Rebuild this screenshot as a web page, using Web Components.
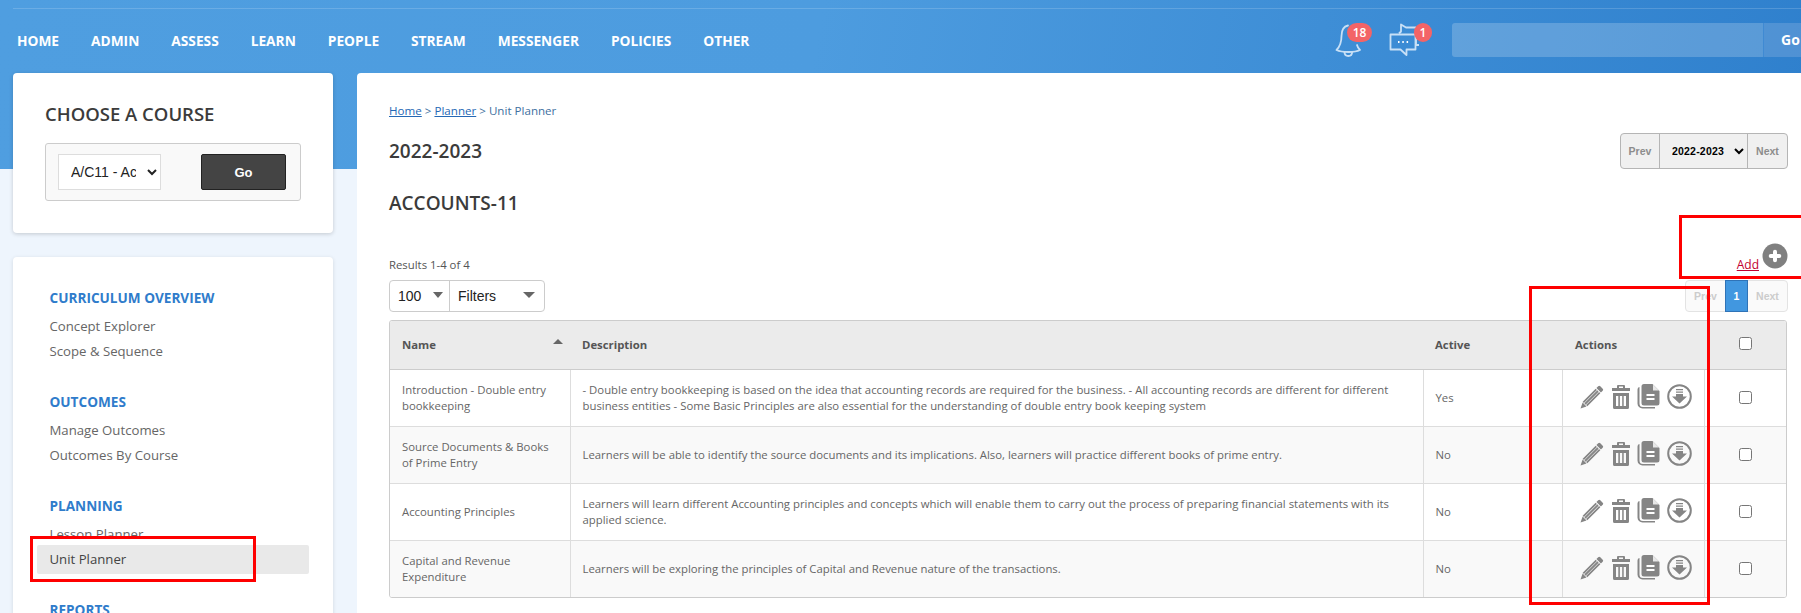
<!DOCTYPE html>
<html><head><meta charset="utf-8"><title>Unit Planner</title>
<style>
html,body{margin:0;padding:0;height:613px;overflow:hidden;background:#eef5fd}
</style></head><body>
<app-shell>
  <top-bar slot="top"></top-bar>
  <side-column slot="side"></side-column>
  <main-panel slot="main"></main-panel>
</app-shell>
<script>
function el(name, css, html, init){
  customElements.define(name, class extends HTMLElement{
    connectedCallback(){
      if(this.shadowRoot) return;
      const r=this.attachShadow({mode:'open'});
      r.innerHTML='<style>'+css+'</style>'+(typeof html==='function'?html(this):html);
      if(init) init(this,r);
    }
  });
}
const FONT='"Open Sans","Liberation Sans",sans-serif';

el('app-shell',`
:host{display:block;position:relative;width:1801px;height:613px;overflow:hidden;font-family:${FONT};
 background:linear-gradient(100deg,#4f9ee0 0%,#4d9cdf 45%,#2f80cd 100%) top/100% 169px no-repeat,#eef5fd}
.body{display:grid;grid-template-columns:320px 1fr;column-gap:24px;padding-left:13px}
.mark{position:absolute;border:3px solid #fe0000;box-sizing:border-box;pointer-events:none}
`,`<slot name="top"></slot><div class="body"><slot name="side"></slot><slot name="main"></slot></div>
<div class="mark" style="left:30px;top:536px;width:226px;height:46px"></div>
<div class="mark" style="left:1679px;top:215px;width:140px;height:64px"></div>
<div class="mark" style="left:1529px;top:286px;width:181px;height:319px"></div>`);

el('top-bar',`
:host{display:block;height:73px;box-sizing:border-box;position:relative;font-family:${FONT}}
.rule{position:absolute;left:13px;right:0;top:8px;height:1px;background:rgba(255,255,255,.16)}
.row{display:flex;align-items:center;height:73px;padding:7px 0 0 17px;box-sizing:border-box}
nav{display:flex;gap:32px;font-size:13.730px;font-weight:700;color:#fff;letter-spacing:0}
.tools{margin-left:auto;display:flex;align-items:center}
.ic{position:relative;display:block;width:36px;height:34px}
.ic svg{position:absolute;left:0;top:0}
.bdg{position:absolute;top:0;height:19px;border-radius:10px;background:#f36467;color:#fff;font-size:12px;font-weight:600;line-height:19px;text-align:center}
.search{margin-left:20px;width:349px;height:34px;display:flex;background:rgba(255,255,255,.2);border-radius:3px 0 0 3px;box-sizing:border-box}
.search i{flex:1}
.search b{width:38px;border-left:1px solid #3f8ad3;color:#fff;font:700 14px/34px ${FONT};padding-left:17px;box-sizing:border-box;background:rgba(60,130,205,.3);overflow:hidden}
`,`<div class="rule"></div><div class="row"><nav><span>HOME</span><span>ADMIN</span><span>ASSESS</span><span>LEARN</span><span>PEOPLE</span><span>STREAM</span><span>MESSENGER</span><span>POLICIES</span><span>OTHER</span></nav>
<div class="tools">
<span class="ic" style="width:54px;height:34px"><svg width="30" height="34" viewBox="0 0 30 34" fill="none" stroke="#c8e0f6" stroke-width="1.800" stroke-linecap="round" stroke-linejoin="round"><path d="M13 2.500C8.500 3.500 6.500 8 6.500 13c0 7-2 11-5 14 3 1.500 7 2 12 2s8.500-.5 11.500-2c-1.500-1.500-2.500-3-3-5"/><path d="M9.500 29c0 2.500 1.800 4 3.800 4s3.800-1.500 3.800-4"/></svg><span class="bdg" style="left:12px;width:25px">18</span></span>
<span class="ic" style="width:43px;height:34px"><svg width="32" height="34" viewBox="0 0 32 34" fill="none" stroke="#c8e0f6" stroke-width="1.800" stroke-linejoin="round"><path d="M1.500 11.500h25V26.500h-9v5.500l-6-5.500H1.500z"/><path d="M10 10.500l2-2V1.500l5 3h10M27 16v6h3"/><path d="M9 19h1.500M13.300 19h1.500M17.600 19h1.500" stroke="#fff"/></svg><span class="bdg" style="left:25px;width:18px">1</span></span>
</div>
<div class="search"><i></i><b>Go</b></div></div>`);

el('side-column',`
:host{display:flex;flex-direction:column;gap:24px}
`,`<course-card></course-card><side-menu></side-menu>`);

el('course-card',`
:host{display:block;height:160px;box-sizing:border-box;background:#fff;border-radius:4px;box-shadow:0 1px 4px rgba(0,0,0,.18);padding:25px 32px 0}
h2{margin:0;font-size:18.500px;line-height:32px;font-weight:600;color:#3b3b3b}
.box{margin-top:13px;height:58px;box-sizing:border-box;border:1px solid #ccc;border-radius:3px;background:#f9f9f9;display:flex;align-items:center;justify-content:space-between;padding:0 14px 0 12px}
select{width:103px;height:36px;background:#fff;border:1px solid #ddd;font:14px "Liberation Sans",sans-serif;padding:0 8px;color:#222;border-radius:0}
button{width:85px;height:36px;background:#444;border:1px solid #222;border-radius:2px;color:#fff;font:700 13px "Liberation Sans",sans-serif}
`,`<h2>CHOOSE A COURSE</h2><div class="box"><select><option>A/C11 - Accounts-11</option></select><button>Go</button></div>`);

el('side-menu',`
:host{display:block;background:#fff;border-radius:4px;box-shadow:0 1px 4px rgba(0,0,0,.12);padding:29px 24px 0;height:400px;box-sizing:border-box}
h3{margin:0 0 0 12.500px;font-size:13.600px;line-height:24px;font-weight:700;color:#2f7ccb}
ul{list-style:none;margin:4px 0 26px;padding:0}
li{font-size:13.200px;line-height:25px;color:#666;padding-left:12.500px;height:25px}
li.on{background:#e9e9e9;border-radius:2px;color:#444;height:29px;line-height:29px;margin:-2px 0;font-weight:500}
`,`<h3>CURRICULUM OVERVIEW</h3><ul><li>Concept Explorer</li><li>Scope &amp; Sequence</li></ul>
<h3>OUTCOMES</h3><ul><li>Manage Outcomes</li><li>Outcomes By Course</li></ul>
<h3>PLANNING</h3><ul><li>Lesson Planner</li><li class="on">Unit Planner</li></ul>
<h3>REPORTS</h3>`);

el('main-panel',`
:host{display:block;background:#fff;border-radius:4px 0 0 0;padding:29px 13px 0 32px;height:540px;box-sizing:border-box;color:#444}
.crumb{font-size:11.600px;line-height:18px;color:#41709f}
.crumb a{color:#2568b5;text-decoration:underline}
.head{display:flex;justify-content:space-between;align-items:flex-start;margin-top:13px;height:36px}
h1,h2{margin:0;font-size:19px;font-weight:600;color:#3b3b3b;line-height:36px}
h2{margin-top:16px}
.add{display:flex;align-items:flex-end;height:30px;margin-top:22px}
.res{font-size:11.350px;line-height:16px;color:#555;margin-right:auto}
.add a{color:#c2002f;font-size:12px;text-decoration:underline;line-height:16px;margin-right:3px}
.add svg{margin-bottom:4px;display:block}
.tools{display:flex;justify-content:space-between;margin-top:7px}
`,`<div class="crumb"><a>Home</a> &gt; <a>Planner</a> &gt; Unit Planner</div>
<div class="head"><h1>2022-2023</h1><year-pager></year-pager></div>
<h2>ACCOUNTS-11</h2>
<div class="add"><div class="res">Results 1-4 of 4</div><a>Add</a><svg width="26" height="26" viewBox="0 0 26 26"><circle cx="13" cy="13" r="12.500" fill="#808080"/><path d="M13 8.700v8.600M8.700 13h8.600" stroke="#fff" stroke-width="4" stroke-linecap="round"/></svg></div>
<div class="tools"><filter-bar></filter-bar><page-nav></page-nav></div>
<unit-table></unit-table>`);

el('year-pager',`
:host{display:flex;height:36px;box-sizing:border-box;width:168px;border:1px solid #b5b5b5;border-radius:4px;background:#f0f0f0;font:700 10.500px "Liberation Sans",sans-serif;color:#8c8c8c}
span{display:flex;align-items:center;justify-content:center}
.p{width:38px}.n{flex:1}
select{width:89px;border:0;border-left:1px solid #b5b5b5;border-right:1px solid #b5b5b5;background:#f0f0f0;font:700 10.500px "Liberation Sans",sans-serif;letter-spacing:.2px;color:#000;padding-left:8px;border-radius:0}
`,`<span class="p">Prev</span><select><option>2022-2023</option></select><span class="n">Next</span>`);

el('filter-bar',`
:host{display:flex;width:156px;height:32px;box-sizing:border-box;border:1px solid #ccc;border-radius:4px;font:14px "Liberation Sans",sans-serif;color:#222}
span{display:flex;align-items:center;padding-left:8px;box-sizing:border-box;position:relative}
span::after{content:"";position:absolute;top:11px;border:5px solid transparent;border-top:6px solid #666;border-bottom:0}
.a{width:60px;border-right:1px solid #ccc}.a::after{right:6px}
.b{flex:1}.b::after{right:9px;border-left-width:6px;border-right-width:6px}
`,`<span class="a">100</span><span class="b">Filters</span>`);

el('page-nav',`
:host{display:flex;width:103px;height:32px;box-sizing:border-box;border:1px solid #e3e3e3;border-radius:4px;font:700 10.500px "Liberation Sans",sans-serif;color:#ccc;background:#fafafa}
span{display:flex;align-items:center;justify-content:center}
.p{width:39px}.n{flex:1}
.c{width:23px;margin:-1px 0;background:#4197e0;border:1px solid #2f73b7;box-sizing:border-box;color:#fff}
`,`<span class="p">Prev</span><span class="c">1</span><span class="n">Next</span>`);

el('row-actions',`
:host{display:flex;align-items:center;justify-content:flex-start;padding-left:17px;height:25px;position:relative;top:-1px}
svg{display:block;flex:none}
`,`<svg width="24" height="24" viewBox="0 0 24 24" style="margin-right:8px" fill="#858585"><path d="M18.200 1.300a1.500 1.500 0 0 1 2.100 0l2.400 2.400a1.500 1.500 0 0 1 0 2.100l-1.800 1.800-4.500-4.500zM.5 23.500l2.100-6 3.900 3.900z"/><path d="M16.300 4.300l-13 13M18 6L5 19M19.700 7.700l-13 13" stroke="#858585" stroke-width="1.800"/></svg>
<svg width="18" height="24" viewBox="0 0 18 24" style="margin-right:7px" fill="#858585"><path d="M6 0h6a1 1 0 0 1 1 1v2h5v3H0V3h5V1a1 1 0 0 1 1-1zm1 1.500V3h4V1.500z" fill-rule="evenodd"/><path d="M1 8h16v14.500a1.500 1.500 0 0 1-1.500 1.500h-13A1.500 1.500 0 0 1 1 22.500zM4 11v10h2.300V11zm3.900 0v10h2.300V11zm3.800 0v10H14V11z" fill-rule="evenodd"/></svg>
<svg width="23" height="25" viewBox="0 0 23 25" style="margin-right:7px" fill="#858585"><path d="M2.500 3v16.500a3.500 3.500 0 0 0 3.500 3.500H18v1.500H5.500A5 5 0 0 1 .5 19.500V5.500A2.500 2.500 0 0 1 2.500 3z"/><path d="M7 0h8.500l7 7v12a2.500 2.500 0 0 1-2.500 2.500H7A2.500 2.500 0 0 1 4.500 19V2.500A2.500 2.500 0 0 1 7 0z"/><path d="M16 .5l6 6h-6z" fill="#e8e8e8"/><path d="M9.500 11h8M9.500 15h8" stroke="#fff" stroke-width="1.800"/></svg>
<svg width="25" height="25" viewBox="0 0 25 25" fill="none"><circle cx="12.500" cy="12.500" r="11.300" stroke="#858585" stroke-width="2"/><path d="M9 5h7v1.200H9zM9 7.500h7v1.200H9zM9 10h7v2.500h4l-7.500 7-7.500-7h4z" fill="#858585"/></svg>`);

el('unit-table',`
:host{display:block;margin-top:8px;width:1398px;border:1px solid #ccc;border-radius:3px;box-sizing:border-box;overflow:hidden;font-size:11.350px;color:#666}
table{border-collapse:collapse;table-layout:fixed;width:100%}
th{background:#ebebeb;height:48px;padding:0 0 0 12px;text-align:left;font-size:11.350px;font-weight:700;color:#555;border-bottom:1px solid #ccc;position:relative;box-sizing:border-box}
th.s::after{content:"";position:absolute;right:7px;top:18px;border:5px solid transparent;border-bottom:5px solid #666;border-top:0}
td{height:57px;box-sizing:border-box;padding:1px 12px 0;line-height:16px;border:1px solid #ddd;border-width:1px 1px 0 1px;vertical-align:middle}
tr td:first-child{border-left:0;padding-right:14px}
tr td:last-child{border-right:0}
tr:nth-child(even) td{background:#f9f9f9}
tr:first-child td{border-top:0}
td.c,th.c{text-align:center;padding:0}
td.d{padding-right:20px}
td.a{padding:0}
input{margin:0;width:13px;height:13px;vertical-align:middle}
th.c input{position:relative;top:-2px}
td.c input{position:relative;top:-1px}
`,`<table><colgroup><col style="width:180px"><col style="width:853px"><col style="width:139px"><col style="width:142px"><col></colgroup>
<thead><tr><th class="s">Name</th><th>Description</th><th>Active</th><th><span style="margin-left:1px">Actions</span></th><th class="c"><input type="checkbox"></th></tr></thead>
<tbody id="b"></tbody></table>`,(h,r)=>{
 const rows=[
 ['Introduction - Double entry bookkeeping','- Double entry bookkeeping is based on the idea that accounting records are required for the business. - All accounting records are different for different business entities - Some Basic Principles are also essential for the understanding of double entry book keeping system','Yes'],
 ['Source Documents &amp; Books of Prime Entry','Learners will be able to identify the source documents and its implications. Also, learners will practice different books of prime entry.','No'],
 ['Accounting Principles','Learners will learn different Accounting principles and concepts which will enable them to carry out the process of preparing financial statements with its applied science.','No'],
 ['Capital and Revenue Expenditure','Learners will be exploring the principles of Capital and Revenue nature of the transactions.','No']];
 r.getElementById('b').innerHTML=rows.map(x=>`<tr><td>${x[0]}</td><td class="d">${x[1]}</td><td>${x[2]}</td><td class="a"><row-actions></row-actions></td><td class="c"><input type="checkbox"></td></tr>`).join('');
});
</script>
</body></html>
